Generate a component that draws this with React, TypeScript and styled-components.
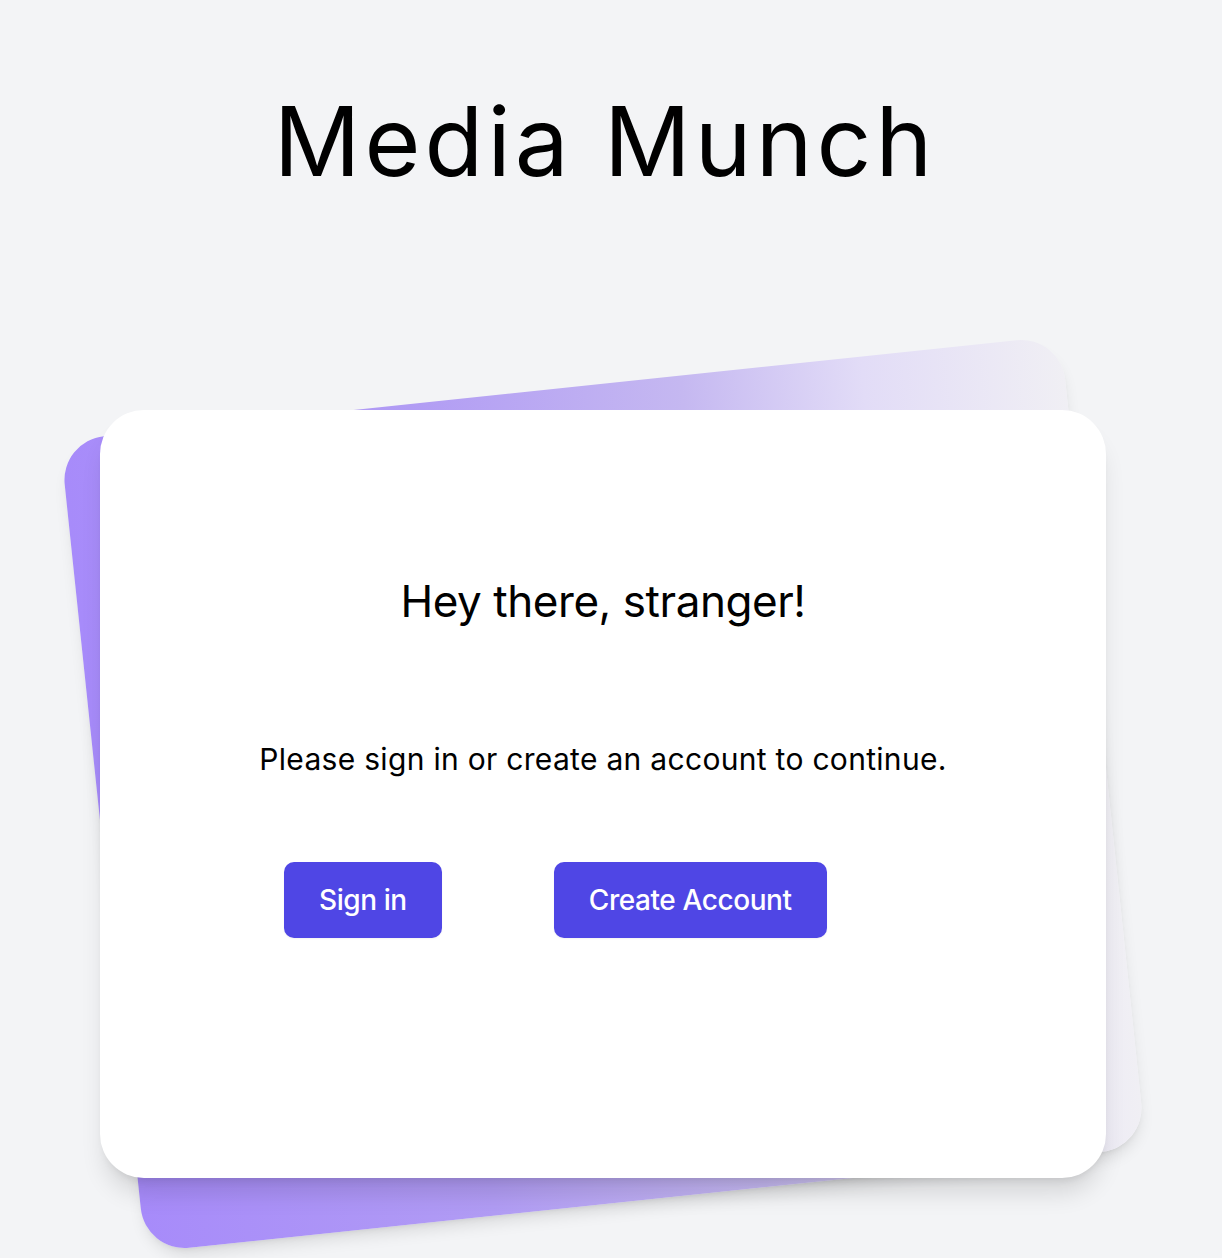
import React from 'react';
import styled, { createGlobalStyle } from 'styled-components';

const GlobalStyle = createGlobalStyle`
  html, body {
    margin: 0;
    padding: 0;
    background: #f3f4f6;
  }
  body {
    font-family: Inter, "Noto Sans", "Liberation Sans", sans-serif;
    color: #000;
    -webkit-font-smoothing: antialiased;
  }
`;

const Page = styled.main`
  display: flex;
  flex-direction: column;
  align-items: center;
  min-height: 1258px;
  padding-right: 16px;
  box-sizing: border-box;
  overflow: hidden;
`;

const Title = styled.h1`
  margin: 0;
  padding-top: 93px;
  font-size: 96px;
  line-height: 1;
  font-weight: 400;
  letter-spacing: 0.043em;
  text-indent: 0.043em;
`;

const CardStack = styled.div`
  position: relative;
  margin-top: 221px;
  width: 1006px;
  height: 768px;
`;

const Backdrop = styled.div`
  position: absolute;
  inset: -24px 0;
  border-radius: 44px;
  background: linear-gradient(
    to right,
    #a78bfa 0%,
    #b19cf4 35%,
    #c5b8f1 62%,
    #e2dcf7 80%,
    #f0eff4 100%
  );
  box-shadow: 0 10px 15px -3px rgba(0, 0, 0, 0.1), 0 4px 6px -4px rgba(0, 0, 0, 0.1);
  transform: rotate(-6deg);
`;

const Card = styled.section`
  position: relative;
  height: 100%;
  box-sizing: border-box;
  padding-top: 169px;
  background: #fff;
  border-radius: 44px;
  box-shadow: 0 20px 25px -5px rgba(0, 0, 0, 0.12), 0 8px 10px -6px rgba(0, 0, 0, 0.1);
  display: flex;
  flex-direction: column;
  align-items: center;
`;

const Greeting = styled.h2`
  margin: 0;
  font-size: 44px;
  line-height: 1;
  font-weight: 400;
  letter-spacing: -0.01em;
`;

const Prompt = styled.p`
  margin: 121px 0 0;
  font-size: 30px;
  line-height: 1;
  letter-spacing: 0.01em;
`;

const Actions = styled.div`
  align-self: stretch;
  display: flex;
  gap: 112px;
  margin-top: 88px;
  padding-left: 184px;
`;

const Button = styled.button`
  height: 76px;
  padding: 0 35px;
  border: none;
  border-radius: 10px;
  background: #4f46e5;
  color: #fff;
  font-family: inherit;
  font-size: 28px;
  font-weight: 500;
  letter-spacing: -0.015em;
  cursor: pointer;
  box-shadow: 0 1px 2px rgba(0, 0, 0, 0.05);
`;

export default function App() {
  return (
    <>
      <GlobalStyle />
      <Page>
        <Title>Media Munch</Title>
        <CardStack>
          <Backdrop />
          <Card>
            <Greeting>Hey there, stranger!</Greeting>
            <Prompt>Please sign in or create an account to continue.</Prompt>
            <Actions>
              <Button>Sign in</Button>
              <Button>Create Account</Button>
            </Actions>
          </Card>
        </CardStack>
      </Page>
    </>
  );
}
